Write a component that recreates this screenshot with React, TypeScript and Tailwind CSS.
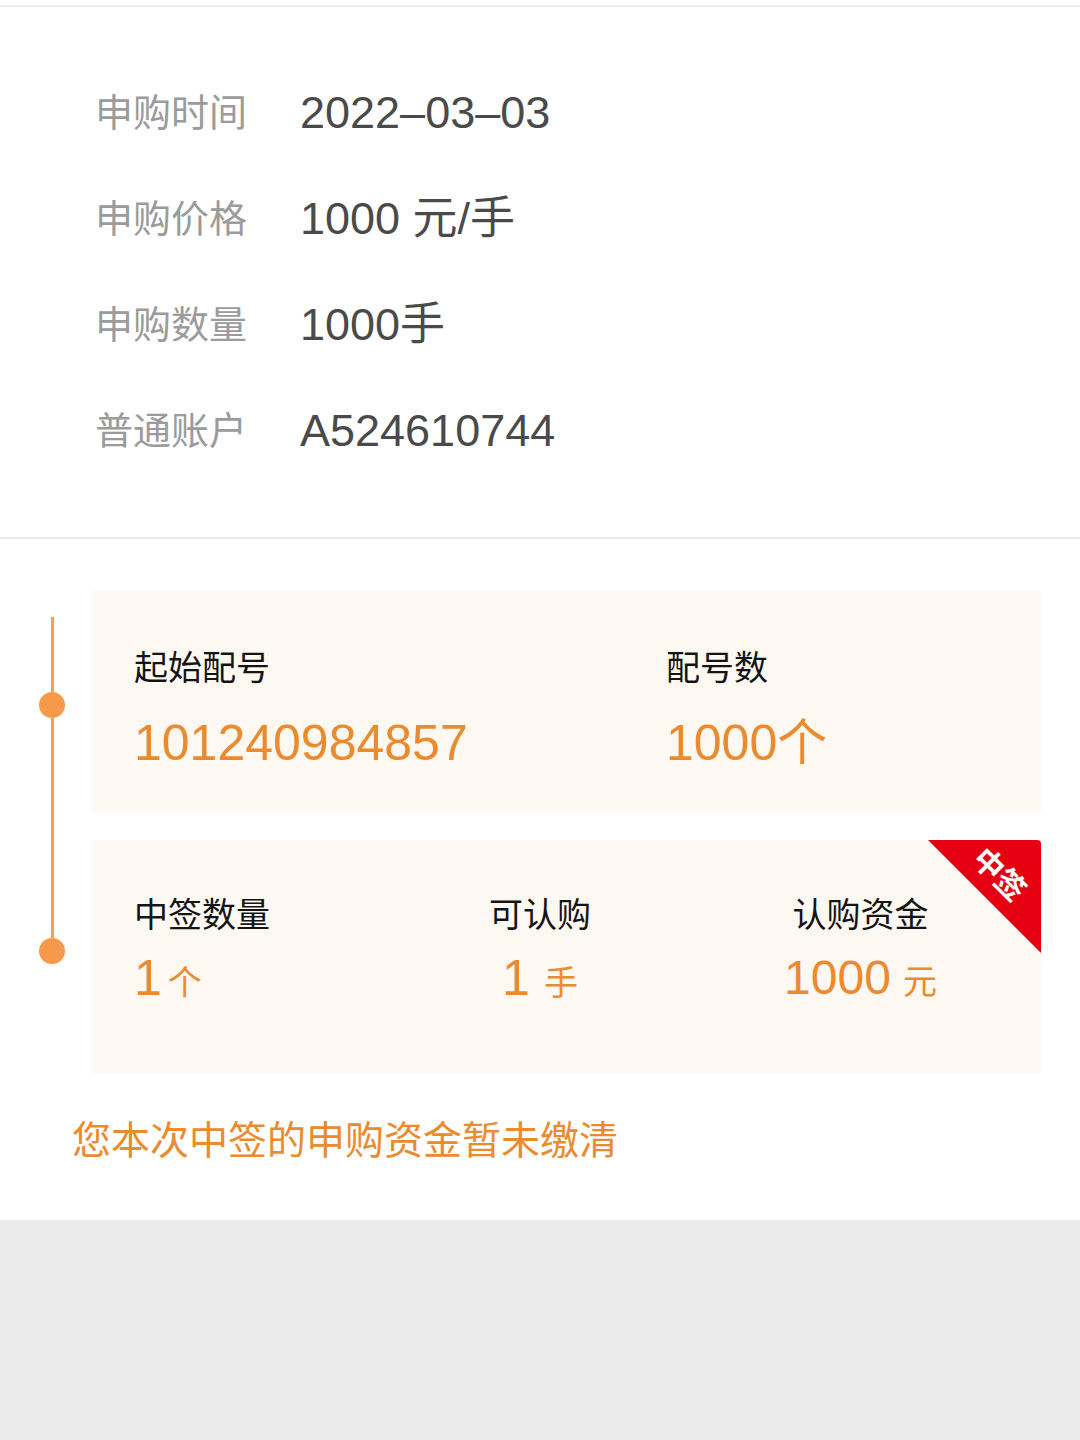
const base = "font-['Liberation_Sans','Noto_Sans_CJK_SC',sans-serif]";

const orders = [
  { label: "申购时间", value: "2022–03–03" },
  { label: "申购价格", value: "1000 元/手" },
  { label: "申购数量", value: "1000手" },
  { label: "普通账户", value: "A524610744" },
];

function InfoRow({ label, value }: { label: string; value: string }) {
  return (
    <div className="flex h-[106px] items-center">
      <div className="w-[300px] pl-[95px] text-[38px] text-[#9b9b9b] whitespace-nowrap">{label}</div>
      <div className="text-[45px] text-[#4a4a4a] whitespace-nowrap">{value}</div>
    </div>
  );
}

function Timeline() {
  return (
    <div className="flex w-[92px] flex-col items-center pl-[12px] pt-[26px]">
      <div className="h-[75px] w-[3px] bg-[#f5a04a]" />
      <div className="h-[26px] w-[26px] rounded-full bg-[#f7994a]" />
      <div className="h-[220px] w-[3px] bg-[#f5a04a]" />
      <div className="h-[26px] w-[26px] rounded-full bg-[#f7994a]" />
    </div>
  );
}

export default function App() {
  return (
    <div className={`${base} w-[1080px] min-h-[1440px] bg-[#ebebeb]`}>
      <div className="bg-white">
        {/* order info */}
        <div className="pt-[5px]">
          <div className="h-[2px] bg-[#ececec]" />
          <div className="pt-[53px] pb-[53px]">
            {orders.map((o) => (
              <InfoRow key={o.label} {...o} />
            ))}
          </div>
          <div className="h-[2px] bg-[#e8e8e8]" />
        </div>

        {/* allotment */}
        <div className="flex pt-[52px]">
          <Timeline />
          <div className="flex w-[949px] flex-col gap-[28px]">
            <div className="h-[221px] bg-[#fdf8f2] pl-[42px] pt-[57px]">
              <div className="flex">
                <div className="w-[532px]">
                  <div className="text-[34px] leading-[40px] text-[#141414]">起始配号</div>
                  <div className="mt-[25px] text-[50px] leading-[60px] text-[#ec8a2e]">101240984857</div>
                </div>
                <div>
                  <div className="text-[34px] leading-[40px] text-[#141414]">配号数</div>
                  <div className="mt-[25px] text-[50px] leading-[60px] text-[#ec8a2e]">1000个</div>
                </div>
              </div>
            </div>

            <div className="relative h-[233px] overflow-hidden rounded-tr-[4px] bg-[#fdf8f2] pl-[42px] pt-[55px]">
              <div className="flex">
                <div className="w-[300px] shrink-0">
                  <div className="text-[34px] leading-[40px] text-[#141414]">中签数量</div>
                  <div className="mt-[13px] flex items-baseline gap-[6px] leading-[60px] text-[#ec8a2e]">
                    <span className="text-[50px]">1</span>
                    <span className="text-[34px]">个</span>
                  </div>
                </div>
                <div className="flex w-[212px] shrink-0 flex-col items-center">
                  <div className="text-[34px] leading-[40px] text-[#141414]">可认购</div>
                  <div className="mt-[13px] flex items-baseline gap-[14px] leading-[60px] text-[#ec8a2e]">
                    <span className="text-[50px]">1</span>
                    <span className="text-[34px]">手</span>
                  </div>
                </div>
                <div className="flex w-[395px] shrink-0 flex-col items-center pl-[34px]">
                  <div className="text-[34px] leading-[40px] text-[#141414]">认购资金</div>
                  <div className="mt-[13px] flex items-baseline gap-[12px] leading-[60px] text-[#ec8a2e]">
                    <span className="text-[48px]">1000</span>
                    <span className="text-[34px]">元</span>
                  </div>
                </div>
              </div>

              {/* corner tag */}
              <div className="absolute right-0 top-0 h-[113px] w-[113px] bg-[#e60012] [clip-path:polygon(0_0,100%_0,100%_100%)]" />
              <div className="absolute right-[0px] top-[19px] w-[84px] rotate-45 text-center text-[30px] font-bold leading-[32px] text-white">
                中签
              </div>
            </div>
          </div>
        </div>

        <div className="pl-[72px] pt-[43px] pb-[54px] text-[39px] leading-[50px] text-[#ec8a2e]">
          您本次中签的申购资金暂未缴清
        </div>
      </div>
    </div>
  );
}
